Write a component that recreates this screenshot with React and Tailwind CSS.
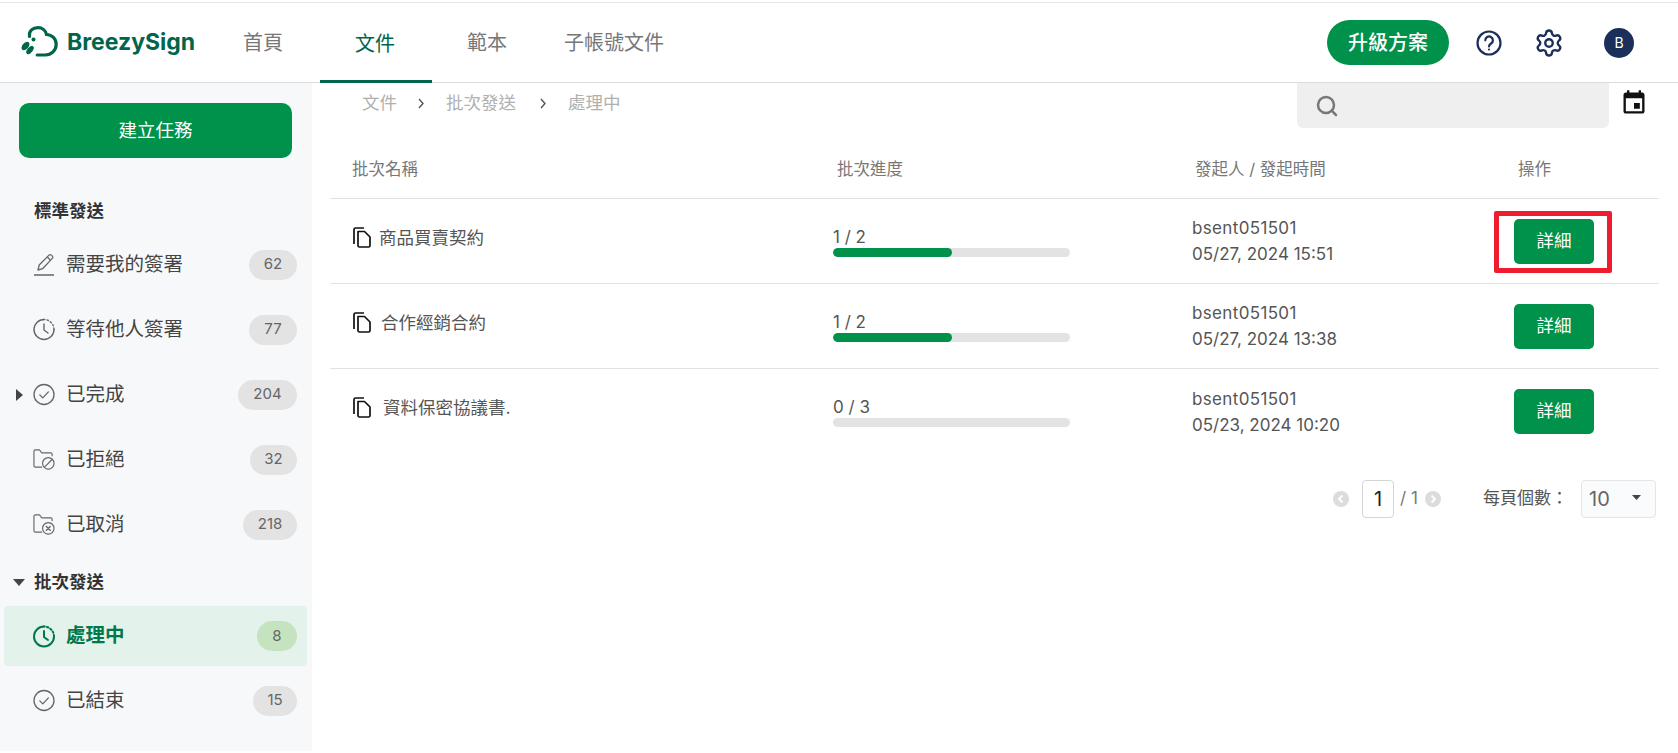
import { Search, Settings } from "lucide-react";

const FONT = "font-['Inter','Noto_Sans_CJK_TC',sans-serif]";

function PenIcon() {
  return (
    <svg width="23" height="27" viewBox="0 0 22 26" fill="none" stroke="#666" strokeWidth="1.3" strokeLinejoin="round">
      <path d="M5 18.500l1.200-5L16 3.600a1.600 1.600 0 0 1 2.300 0l1 1a1.600 1.600 0 0 1 0 2.300L9.600 17.200 5 18.500z" />
      <path d="M14.200 5.400l3.300 3.300" />
      <path d="M1 23.500h20" strokeWidth="1.500" />
    </svg>
  );
}

function ClockIcon({ color = "#666", sw = 1.4 }) {
  return (
    <svg width="23" height="23" viewBox="0 0 22 22" fill="none" stroke={color} strokeWidth={sw} strokeLinecap="round" strokeLinejoin="round">
      <path d="M11 1a10 10 0 1 0 10 10" />
      <path d="M21 11a10 10 0 0 0-10-10" strokeDasharray="1.500 2.200" />
      <path d="M11 5.500V11.500l4 3" />
    </svg>
  );
}

function CheckIcon() {
  return (
    <svg width="23" height="23" viewBox="0 0 22 22" fill="none" stroke="#666" strokeWidth="1.3" strokeLinecap="round" strokeLinejoin="round">
      <circle cx="11" cy="11" r="10" />
      <path d="M6.800 11.400l3 3 5.600-6" />
    </svg>
  );
}

function FolderIcon({ kind }) {
  return (
    <svg width="24" height="23" viewBox="0 0 23 22" fill="none" stroke="#666" strokeWidth="1.2" strokeLinecap="round" strokeLinejoin="round">
      <path d="M9 19H2.500A1.500 1.500 0 0 1 1 17.500v-15A1.500 1.500 0 0 1 2.500 1h4.200l2.600 3h9.200A1.500 1.500 0 0 1 20 5.500V7" />
      <circle cx="16" cy="15" r="6" />
      {kind === "ban" ? (
        <path d="M12 19l8-8" />
      ) : (
        <path d="M14 13l4 4M18 13l-4 4" strokeWidth="1.500" />
      )}
    </svg>
  );
}

function CopyIcon() {
  return (
    <svg width="18" height="21" viewBox="0 0 18 21" fill="none" stroke="#111" strokeWidth="1.700" strokeLinejoin="round" className="mb-[2px]">
      <path d="M1 17V2.500A1.500 1.500 0 0 1 2.500 1H11" />
      <path d="M5 4.500h6.500L17 10v8.500a1.500 1.500 0 0 1-1.500 1.500h-9A1.500 1.500 0 0 1 5 18.500V4.500z" />
    </svg>
  );
}

function Logo() {
  return (
    <svg width="37" height="32" viewBox="0 0 37 32" fill="#00654a" stroke="none">
      <path
        d="M8.500 10.500C7.500 4.500 12 1.700 17 1.700c4.500 0 7.700 3 8.500 6.800 5.500.2 9.700 4.400 9.700 9.800 0 6-4.800 10.700-11 10.700h-8"
        fill="none"
        stroke="#00654a"
        strokeWidth="3.200"
        strokeLinecap="round"
      />
      <circle cx="12.500" cy="13.500" r="2" />
      <ellipse cx="4.500" cy="20" rx="5" ry="3" transform="rotate(-50 4.500 20)" />
      <ellipse cx="9" cy="24" rx="4.800" ry="2.600" transform="rotate(-50 9 24)" />
    </svg>
  );
}

function Triangle({ dir }) {
  return dir === "down" ? (
    <svg width="12" height="7" viewBox="0 0 12 7">
      <path d="M0 0h12L6 7z" fill="#444" />
    </svg>
  ) : (
    <svg width="7" height="12" viewBox="0 0 7 12">
      <path d="M0 0l7 6-7 6z" fill="#444" />
    </svg>
  );
}

function Chevron({ className }) {
  return (
    <svg width="6" height="11" viewBox="0 0 6 11" fill="none" stroke="#555" strokeWidth="1.400" className={className}>
      <path d="M1 1l4 4.500L1 10" />
    </svg>
  );
}

function NavRow({ icon, label, count, badgeW, caret, active }) {
  return (
    <div
      className={`mx-[4px] flex w-[303px] items-center rounded pl-[12px] pr-[10px] ${
        active ? "mt-[10px] h-[60px] bg-[#e3f2ea]" : "h-[65px]"
      }`}
    >
      <span className="flex w-[17px] shrink-0 items-center">{caret && <Triangle dir="right" />}</span>
      <span className="flex w-[22px] shrink-0 items-center justify-center">{icon}</span>
      <span
        className={`ml-[11px] text-[19.5px] ${active ? "font-bold text-[#00794a]" : "text-[#444]"}`}
      >
        {label}
      </span>
      <span
        style={{ width: badgeW }}
        className={`ml-auto flex h-[30px] items-center justify-center rounded-full text-[15px] text-[#666] ${
          active ? "bg-[#c5e3bf]" : "bg-[#e3e3e3]"
        }`}
      >
        {count}
      </span>
    </div>
  );
}

function Sidebar() {
  return (
    <aside className="h-[668px] w-[312px] shrink-0 bg-[#f7f8fa]">
      <div className="mx-[19px] mt-[20px] flex h-[55px] w-[273px] items-center justify-center rounded-[10px] bg-[#00914a] pt-[1px] text-[18.5px] text-white">
        建立任務
      </div>
      <div className="ml-[34px] mt-[39px] flex h-[28px] items-center text-[17.5px] font-bold text-[#333]">標準發送</div>
      <div className="mt-[7px]">
        <NavRow icon={<PenIcon />} label="需要我的簽署" count="62" badgeW={48} />
        <NavRow icon={<ClockIcon />} label="等待他人簽署" count="77" badgeW={48} />
        <NavRow icon={<CheckIcon />} label="已完成" count="204" badgeW={59} caret />
        <NavRow icon={<FolderIcon kind="ban" />} label="已拒絕" count="32" badgeW={47} />
        <NavRow icon={<FolderIcon kind="x" />} label="已取消" count="218" badgeW={54} />
      </div>
      <div className="ml-[13px] mt-[11px] flex h-[28px] items-center text-[17.5px] font-bold text-[#333]">
        <span className="flex w-[21px] shrink-0 items-center">
          <Triangle dir="down" />
        </span>
        批次發送
      </div>
      <NavRow icon={<ClockIcon color="#00794a" sw={2} />} label="處理中" count="8" badgeW={40} active />
      <div className="mt-[2px]">
        <NavRow icon={<CheckIcon />} label="已結束" count="15" badgeW={44} />
      </div>
    </aside>
  );
}

const ROWS = [
  { name: "商品買賣契約", gap: "ml-[8px]", done: "1 / 2", pct: "50%", date: "05/27, 2024 15:51", marked: true },
  { name: "合作經銷合約", gap: "ml-[10px]", done: "1 / 2", pct: "50%", date: "05/27, 2024 13:38" },
  { name: "資料保密協議書.", gap: "ml-[12px]", done: "0 / 3", pct: "0%", date: "05/23, 2024 10:20" },
];

function DetailButton({ marked }) {
  return (
    <span className="relative flex h-[45px] w-[80px] items-center justify-center rounded-[5px] bg-[#00914a] text-[17.5px] text-white">
      詳細
      {marked && (
        <span className="absolute left-[-20px] top-[-8px] h-[62px] w-[118px] rounded-[2px] border-[5px] border-[#ed1c2e]" />
      )}
    </span>
  );
}

function Table() {
  const cols = "grid grid-cols-[503px_359px_322px_1fr] items-center";
  return (
    <div className="ml-[18px] mr-[19px]">
      <div className={`${cols} h-[70px] border-b border-[#e2e2e2] pt-[12px] text-[16.5px] text-[#777]`}>
        <span className="pl-[22px]">批次名稱</span>
        <span className="pl-[4px]">批次進度</span>
        <span className="pl-[3px]">發起人 / 發起時間</span>
        <span className="pl-[4px]">操作</span>
      </div>
      {ROWS.map((row, i) => (
        <div
          key={row.name}
          className={`${cols} h-[85px] ${i < ROWS.length - 1 ? "border-b border-[#e2e2e2]" : ""}`}
        >
          <div className="flex items-center pb-[6px] pl-[23px] text-[17.5px] text-[#555]">
            <CopyIcon />
            <span className={row.gap}>{row.name}</span>
          </div>
          <div className="w-[237px]">
            <div className="text-[17px] leading-[22px] text-[#555]">{row.done}</div>
            <div className="h-[9px] overflow-hidden rounded-full bg-[#e3e3e3]">
              <div className="h-full rounded-full bg-[#00914a]" style={{ width: row.pct }} />
            </div>
          </div>
          <div className="text-[17px] leading-[26px] text-[#555]">
            <div className="tracking-[0.35px]">bsent051501</div>
            <div>{row.date}</div>
          </div>
          <DetailButton marked={row.marked} />
        </div>
      ))}
    </div>
  );
}

function PageArrow({ d }) {
  return (
    <svg width="16" height="16" viewBox="0 0 16 16">
      <circle cx="8" cy="8" r="8" fill="#dcdcdc" />
      <path d={d} fill="none" stroke="#fff" strokeWidth="2" />
    </svg>
  );
}

function Pagination() {
  return (
    <div className="mr-[22px] mt-[26px] flex items-center justify-end text-[#555]">
      <PageArrow d="M9.500 4.500L6 8l3.500 3.500" />
      <span className="ml-[13px] flex h-[38px] w-[32px] items-center justify-center rounded-[4px] border border-[#d5d5d5] text-[20px] text-[#222]">
        1
      </span>
      <span className="ml-[6px] w-[19px] text-[17px] text-[#777]">/ 1</span>
      <span className="ml-[6px] flex">
        <PageArrow d="M6.500 4.500L10 8l-3.500 3.500" />
      </span>
      <span className="ml-[42px] w-[84px] whitespace-nowrap text-[17px]">每頁個數：</span>
      <span className="ml-[14px] flex h-[38px] w-[75px] items-center justify-between rounded-[4px] border border-[#e5e5e5] bg-[#fafbfc] pl-[7px] pr-[14px] text-[20px] text-[#666]">
        10
        <svg width="9" height="5" viewBox="0 0 11 6" className="mb-[4px]">
          <path d="M0 0h11L5.500 6z" fill="#444" />
        </svg>
      </span>
    </div>
  );
}

export default function App() {
  return (
    <div className={`min-h-[753px] overflow-hidden bg-white pt-[2px] ${FONT}`}>
      <header className="flex h-[81px] items-center border-y border-t-[#e5e5e5] border-b-[#dcdcdc] pr-[44px]">
        <div className="flex w-[208px] shrink-0 items-center gap-[9px] pb-[1px] pl-[21px]">
          <Logo />
          <span className="text-[23px] font-bold text-[#00654a]">BreezySign</span>
        </div>
        <nav className="flex h-full text-[20px] text-[#777]">
          <a className="flex min-w-[112px] items-center justify-center pl-[20px] pr-[22px] pt-[1px]">首頁</a>
          <a className="-mb-px flex min-w-[112px] items-center justify-center border-b-[3px] border-[#00654a] pl-[20px] pr-[22px] pt-[4px] text-[#00654a]">文件</a>
          <a className="flex min-w-[112px] items-center justify-center pl-[20px] pr-[22px] pt-[1px]">範本</a>
          <a className="flex min-w-[112px] items-center justify-center pl-[20px] pr-[22px] pt-[1px]">子帳號文件</a>
        </nav>
        <div className="ml-auto flex items-center">
          <span className="flex h-[45px] w-[122px] items-center justify-center rounded-full bg-[#00914a] text-[20px] font-medium text-white">
            升級方案
          </span>
          <svg width="26" height="26" viewBox="0 0 26 26" fill="none" stroke="#1a2f5a" strokeWidth="2.200" className="ml-[27px]">
            <circle cx="13" cy="13" r="11.500" />
            <path d="M9.300 10.300a3.800 3.800 0 1 1 5.800 3.200c-1.300.8-2.100 1.600-2.100 3" strokeLinecap="round" />
            <circle cx="13" cy="19.500" r="1.100" fill="#1a2f5a" stroke="none" />
          </svg>
          <Settings size={30} color="#1a2f5a" strokeWidth={1.900} className="ml-[32px]" />
          <span className="ml-[40px] flex h-[30px] w-[30px] items-center justify-center rounded-full bg-[#1a2f5a] text-[14px] text-white">
            B
          </span>
        </div>
      </header>
      <div className="flex">
        <Sidebar />
        <main className="min-w-0 flex-1">
          <div className="flex h-[46px] items-start pr-[30px]">
            <div className="flex items-center pl-[50px] pt-[7px] text-[17.5px] text-[#b0b0b0]">
              <span>文件</span>
              <Chevron className="ml-[21px]" />
              <span className="ml-[22px]">批次發送</span>
              <Chevron className="ml-[24px]" />
              <span className="ml-[22px]">處理中</span>
            </div>
            <div className="ml-auto flex h-[45px] w-[312px] items-center rounded-b-[6px] bg-[#efefef] pl-[18px]">
              <Search size={24} color="#777" strokeWidth={2.500} />
            </div>
            <svg width="28" height="28" viewBox="0 0 24 24" className="ml-[11px] mt-[6px]" fill="#111">
              <path d="M17 12h-5v5h5v-5zM16 1v2H8V1H6v2H5c-1.110 0-1.990.9-1.990 2L3 19c0 1.100.89 2 2 2h14c1.100 0 2-.9 2-2V5c0-1.100-.9-2-2-2h-1V1h-2zm3 18H5V8h14v11z" />
            </svg>
          </div>
          <Table />
          <Pagination />
        </main>
      </div>
    </div>
  );
}
